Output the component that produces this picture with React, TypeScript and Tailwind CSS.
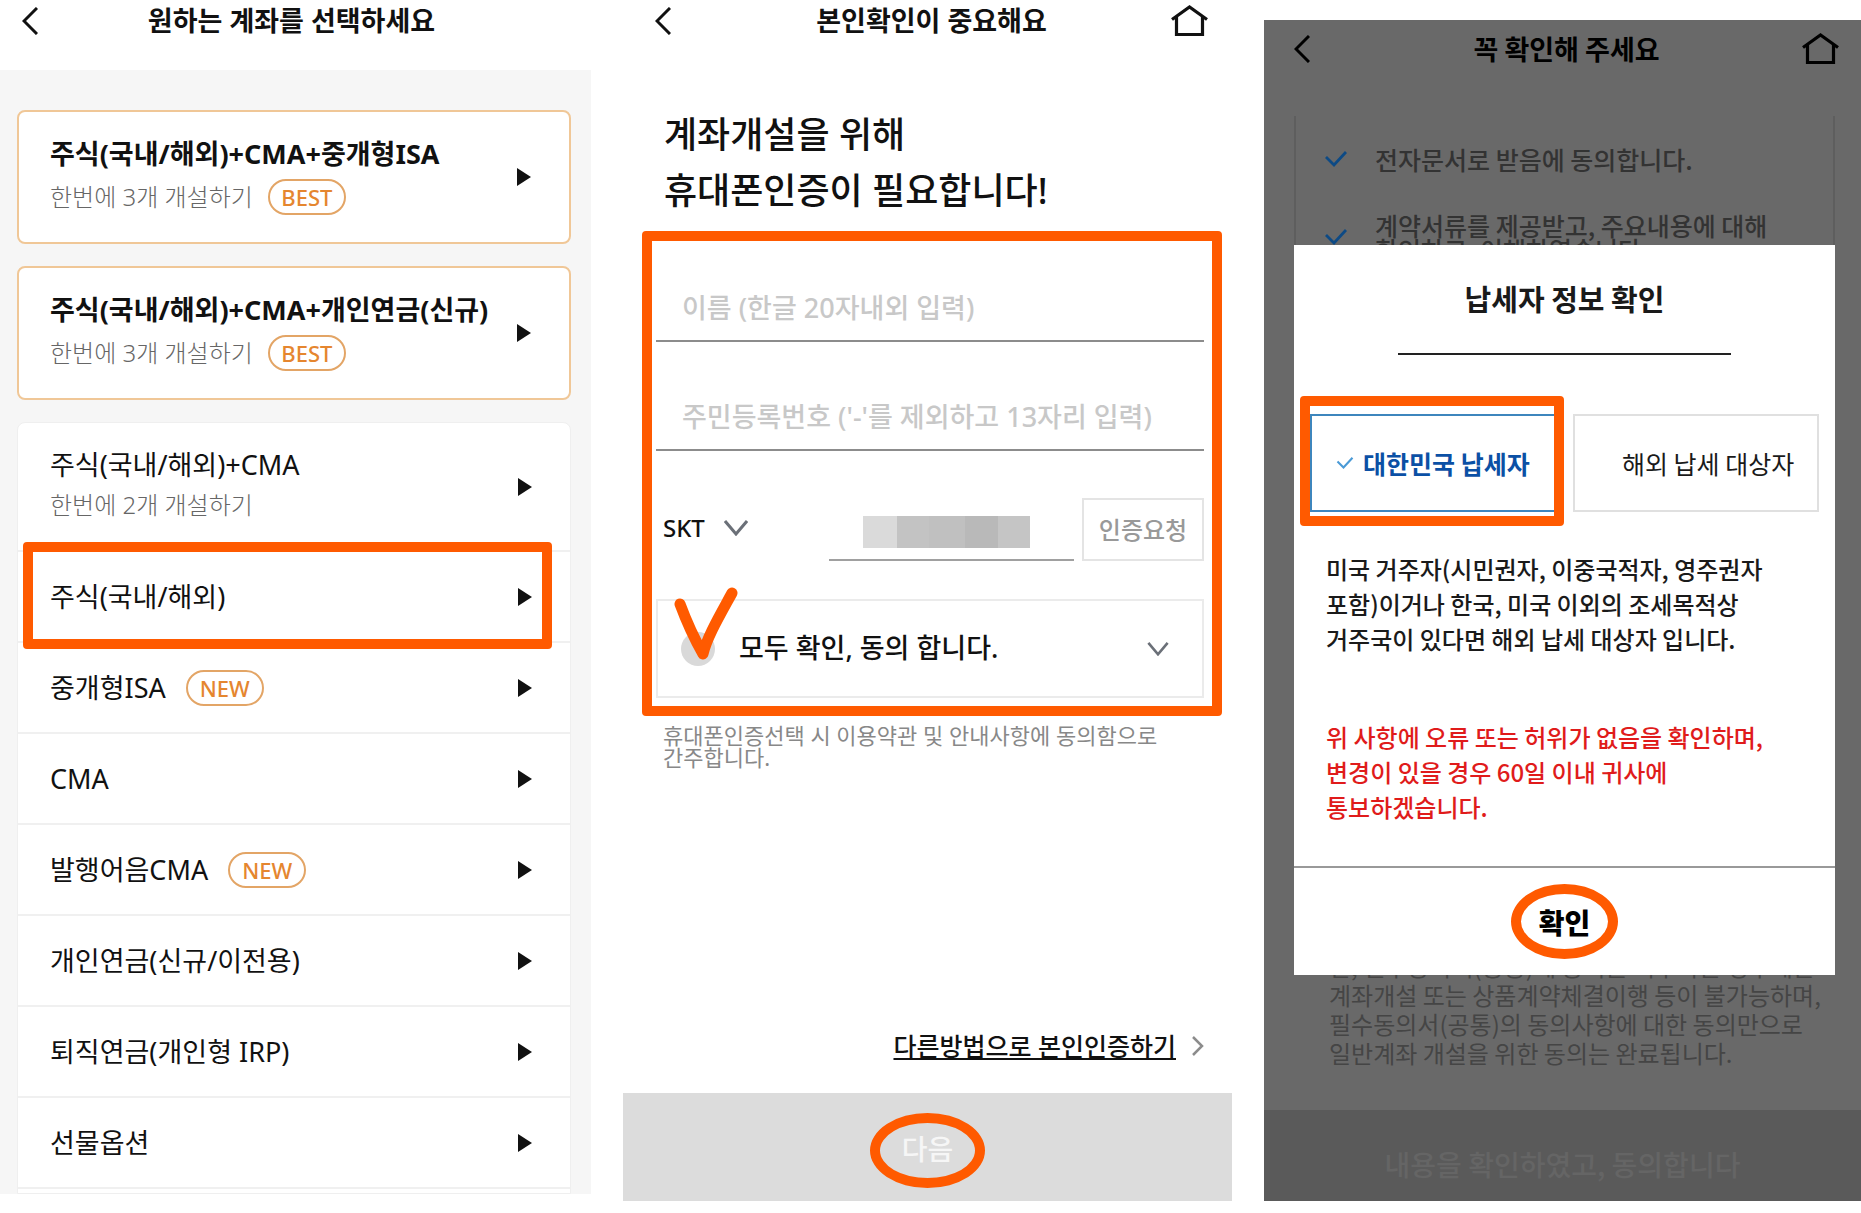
import { ReactNode } from 'react';

const accounts = [
    { title: '주식(국내/해외)', marked: true },
    { title: '중개형ISA', badge: 'NEW' },
    { title: 'CMA' },
    { title: '발행어음CMA', badge: 'NEW' },
    { title: '개인연금(신규/이전용)' },
    { title: '퇴직연금(개인형 IRP)' },
    { title: '선물옵션' },
];

const packages = [
    { title: '주식(국내/해외)+CMA+중개형ISA' },
    { title: '주식(국내/해외)+CMA+개인연금(신규)' },
];

function BackIcon(){
    return(
        <svg className="w-4 h-7" viewBox="0 0 16 28" fill="none" stroke="currentColor" strokeWidth="3">
            <path d="M15 1 L2 14 L15 27" />
        </svg>
    )
}

function HomeIcon(){
    return(
        <svg className="w-[37px] h-8" viewBox="0 0 37 32" fill="none" stroke="currentColor" strokeWidth="3.200">
            <path d="M1 14.500 L18.500 2 L36 14.500" />
            <path d="M5.500 12 V29.500 H31.500 V12" />
        </svg>
    )
}

function DownIcon({ className }: { className: string }){
    return(
        <svg className={className} viewBox="0 0 24 16" fill="none" stroke="#6b7078" strokeWidth="3">
            <path d="M1 1 L12 14 L23 1" />
        </svg>
    )
}

function CheckIcon({ className }: { className: string }){
    return(
        <svg className={className} viewBox="0 0 22 16" fill="none" stroke="currentColor" strokeWidth="2.800">
            <path d="M1 6 L9 14 L21 1" />
        </svg>
    )
}

function Arrow(){
    return(
        <svg className="w-[14px] h-[18px] shrink-0" viewBox="0 0 14 18" fill="#111">
            <path d="M0 0 L14 9 L0 18 Z" />
        </svg>
    )
}

function Badge({ children }: { children: ReactNode }){
    return(
        <span className="inline-flex items-center justify-center w-[78px] h-9 rounded-full border-2 border-[#e3a566] text-[#e5862f] text-[22px] leading-8 font-medium">
            {children}
        </span>
    )
}

function Header({ title, home }: { title: string; home?: boolean }){
    return(
        <header className="grid grid-cols-[1fr_auto_1fr] items-center h-[42px] pl-[30px] pr-[22px]">
            <button aria-label="뒤로" className="justify-self-start"><BackIcon /></button>
            <h1 className="text-[27px] leading-10 font-bold">{title}</h1>
            {home && <button aria-label="홈" className="justify-self-end"><HomeIcon /></button>}
        </header>
    )
}

function AccountScreen(){
    return(
        <section className="self-start bg-[#f6f6f6] text-[#111]">
            <div className="bg-white h-[70px] -ml-2 pr-2">
                <Header title="원하는 계좌를 선택하세요" />
            </div>

            <div className="flex flex-col gap-[22px] pt-10 pl-[17px] pr-5">
                {packages.map((item) => (
                    <button key={item.title} className="flex items-center justify-between h-[134px] pl-[31px] pr-[38px] bg-white border-2 border-[#f0c797] rounded-lg text-left">
                        <span className="flex flex-col gap-[7px] pb-1">
                            <b className="text-[27px] leading-9 font-bold">{item.title}</b>
                            <span className="flex items-center gap-[15px] text-2xl leading-9 font-light text-[#666]">
                                한번에 3개 개설하기
                                <Badge>BEST</Badge>
                            </span>
                        </span>
                        <Arrow />
                    </button>
                ))}

                <ul className="bg-white border border-[#efefef] rounded-t-lg pb-1">
                    <li className="border-b-2 border-[#f0f0f0]">
                        <button className="flex items-center justify-between w-full h-[127px] pl-8 pr-[38px] text-left">
                            <span className="flex flex-col gap-1 pb-1">
                                <span className="text-[27px] leading-9">주식(국내/해외)+CMA</span>
                                <span className="text-2xl leading-9 font-light text-[#666]">한번에 2개 개설하기</span>
                            </span>
                            <Arrow />
                        </button>
                    </li>
                    {accounts.map((item) => (
                        <li key={item.title} className="relative border-b-2 border-[#f0f0f0]">
                            <button className="flex items-center justify-between w-full h-[89px] pl-8 pr-[38px] text-left">
                                <span className="flex items-center gap-5 text-[27px] leading-9">
                                    {item.title}
                                    {item.badge && <Badge>{item.badge}</Badge>}
                                </span>
                                <Arrow />
                            </button>
                            {item.marked && <span className="absolute z-10 left-[5px] right-[18px] -top-[10px] -bottom-2 border-10 border-[#ff5a00] rounded pointer-events-none" />}
                        </li>
                    ))}
                </ul>
            </div>
        </section>
    )
}

function VerifyScreen(){
    return(
        <section className="flex flex-col text-[#111]">
            <div className="px-[2px]">
                <Header title="본인확인이 중요해요" home />
            </div>

            <h2 className="mt-[65px] px-[41px] text-4xl leading-14 font-medium">
                계좌개설을 위해<br />휴대폰인증이 필요합니다!
            </h2>

            <form className="mt-3 ml-[19px] mr-[10px] pt-[34px] pb-2 pl-1 pr-2 border-10 border-[#ff5a00] rounded">
                <input aria-label="이름" placeholder="이름 (한글 20자내외 입력)" className="block w-full h-[67px] pl-[26px] text-[27px] font-medium border-b-2 border-[#8c8c8c] placeholder:text-[#c8c8c8] outline-none" />
                <input aria-label="주민등록번호" placeholder="주민등록번호 ('-'를 제외하고 13자리 입력)" className="block w-full h-[67px] mt-[42px] pl-[26px] text-[27px] font-medium border-b-2 border-[#8c8c8c] placeholder:text-[#c8c8c8] outline-none" />

                <div className="flex mt-[47px] h-[63px]">
                    <div className="relative flex items-center w-[85px] h-15 ml-[7px]">
                        <select aria-label="통신사" className="appearance-none w-full text-2xl font-medium outline-none">
                            <option>SKT</option>
                        </select>
                        <DownIcon className="absolute right-0 w-6 h-4 pointer-events-none" />
                    </div>
                    <div className="relative flex-1 ml-[81px] mr-2">
                        <input aria-label="휴대폰 번호" type="tel" className="block w-full h-full border-b-2 border-[#a0a0a0] outline-none" />
                        {/* 번호 가림 */}
                        <span className="absolute left-[34px] top-[18px] flex w-[167px] h-8">
                            <i className="w-[34px] bg-[#dadada]" />
                            <i className="w-8 bg-[#c3c3c3]" />
                            <i className="w-9 bg-[#c0c0c0]" />
                            <i className="w-[33px] bg-[#b9b9b9]" />
                            <i className="w-8 bg-[#c5c5c5]" />
                        </span>
                    </div>
                    <button type="button" className="w-[122px] border-2 border-[#e4e4e4] text-2xl font-medium text-[#999]">인증요청</button>
                </div>

                <div className="relative flex items-center mt-[38px] h-[99px] pl-[23px] pr-[33px] border-2 border-[#ebebeb]">
                    <input id="agree" type="checkbox" className="appearance-none size-[34px] rounded-full bg-[#d9d9d9]" />
                    <label htmlFor="agree" className="flex-1 pl-6 pb-[2px] text-[27px] leading-10 font-medium">모두 확인, 동의 합니다.</label>
                    <DownIcon className="w-[22px] h-[14px]" />
                    <svg className="absolute left-4 -top-4 w-16 h-[76px] pointer-events-none" viewBox="0 0 64 76" fill="none" stroke="#ff5a00" strokeWidth="11" strokeLinecap="round" strokeLinejoin="round">
                        <path d="M6 19 Q16 46 29 69 C33 52 46 30 58 8" />
                    </svg>
                </div>
            </form>

            <p className="mt-2 px-10 text-[22px] leading-[22px] text-[#888]">
                휴대폰인증선택 시 이용약관 및 안내사항에 동의함으로<br />간주합니다.
            </p>

            <a href="#" className="flex items-center self-end gap-4 mt-auto mb-[29px] mr-7 text-[25px] leading-9 font-medium">
                <span className="underline decoration-2 underline-offset-2">다른방법으로 본인인증하기</span>
                <svg className="w-3 h-5" viewBox="0 0 12 20" fill="none" stroke="#8c8c8c" strokeWidth="2.500">
                    <path d="M1 1 L10 10 L1 19" />
                </svg>
            </a>

            <button className="relative h-[108px] pt-1 bg-[#dcdcdc] text-[28px] font-medium text-[#f6f6f6]">
                다음
                <span className="absolute inset-x-0 top-5 mx-auto w-[115px] h-[75px] border-10 border-[#ff5a00] rounded-[50%]" />
            </button>
        </section>
    )
}

function TaxModal(){
    return(
        <div role="dialog" aria-label="납세자 정보 확인" className="relative [grid-area:1/1] mt-[225px] mb-[226px] ml-[30px] mr-[26px] bg-white text-[#1a1a1a]">
            <h2 className="pt-[33px] text-[29px] leading-10 font-bold text-center">납세자 정보 확인</h2>
            <hr className="mt-[35px] mx-[104px] border-t-2 border-[#222]" />

            <div className="grid grid-cols-2 gap-[17px] mt-[59px] px-4 text-[25px] leading-9">
                <label className="relative flex items-center gap-[9px] h-[98px] pl-6 border-2 border-[#3d86bd] text-[#0b50a5] font-bold">
                    <input type="radio" name="tax" defaultChecked className="sr-only" />
                    <CheckIcon className="w-[18px] h-3 text-[#4a9ad6]" />
                    대한민국 납세자
                    <span className="absolute -left-3 -right-[10px] -top-5 -bottom-4 border-10 border-[#ff5a00] rounded pointer-events-none" />
                </label>
                <label className="flex items-center gap-[7px] h-[98px] pl-[22px] border-2 border-[#e0e0e0]">
                    <input type="radio" name="tax" className="sr-only" />
                    <CheckIcon className="w-[18px] h-3 invisible" />
                    해외 납세 대상자
                </label>
            </div>

            <p className="mt-[39px] px-8 text-2xl leading-[35px] font-medium">
                미국 거주자(시민권자, 이중국적자, 영주권자<br />
                포함)이거나 한국, 미국 이외의 조세목적상<br />
                거주국이 있다면 해외 납세 대상자 입니다.
            </p>
            <p className="mt-[63px] mb-[42px] px-8 text-2xl leading-[35px] font-medium text-[#e01b1b]">
                위 사항에 오류 또는 허위가 없음을 확인하며,<br />
                변경이 있을 경우 60일 이내 귀사에<br />
                통보하겠습니다.
            </p>

            <button className="relative block w-full h-[109px] border-t-2 border-[#999] text-[28px] font-black text-black">
                확인
                <span className="absolute inset-0 m-auto w-[107px] h-[75px] border-10 border-[#ff5a00] rounded-[50%]" />
            </button>
        </div>
    )
}

function ConfirmScreen(){
    return(
        <section className="grid grid-cols-1 mt-5 bg-[#696969] text-black font-['Noto_Sans_CJK_KR',sans-serif]">
            <div className="[grid-area:1/1] flex flex-col pt-2">
                <Header title="꼭 확인해 주세요" home />

                <ul className="flex flex-col gap-[42px] mt-[46px] ml-[30px] mr-[26px] h-[200px] pt-[31px] pl-[29px] border-x-2 border-[#5e5e5e] text-[25px] leading-6 font-medium text-[#333]">
                    <li className="flex items-center gap-7">
                        <CheckIcon className="w-[22px] h-4 text-[#0d4a85]" />
                        전자문서로 받음에 동의합니다.
                    </li>
                    <li className="flex items-center gap-7">
                        <CheckIcon className="w-[22px] h-4 text-[#0d4a85]" />
                        <span>계약서류를 제공받고, 주요내용에 대해<br />확인하고, 이해하였습니다.</span>
                    </li>
                </ul>

                <p className="mt-auto mb-[43px] pl-[65px] text-2xl leading-[29px] text-[#454545]">
                    단, 필수동의서(공통)에 동의를 거부하는 경우에는<br />
                    계좌개설 또는 상품계약체결이행 등이 불가능하며,<br />
                    필수동의서(공통)의 동의사항에 대한 동의만으로<br />
                    일반계좌 개설을 위한 동의는 완료됩니다.
                </p>

                <button className="h-[91px] pt-4 bg-[#5a5a5a] text-[28px] font-medium text-[#656565]">내용을 확인하였고, 동의합니다</button>
            </div>

            <TaxModal />
        </section>
    )
}

export default function App(){
    return(
        <main className="grid grid-cols-[minmax(0,591fr)_minmax(0,609fr)_minmax(0,597fr)] gap-8 pb-3 bg-white break-keep font-['Noto_Sans','Noto_Sans_CJK_KR',sans-serif]">
            <AccountScreen />
            <VerifyScreen />
            <ConfirmScreen />
        </main>
    )
}
